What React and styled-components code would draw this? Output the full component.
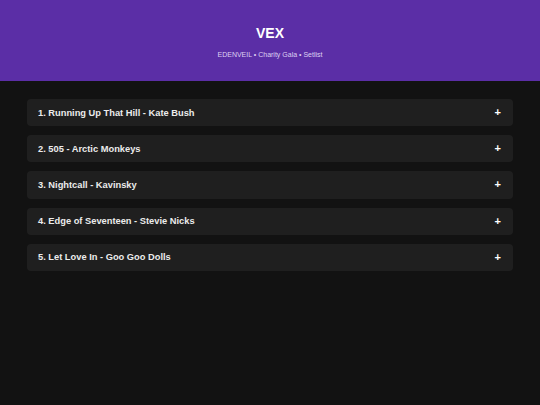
import React from 'react';
import styled, { createGlobalStyle } from 'styled-components';

const GlobalStyle = createGlobalStyle`
  html, body {
    margin: 0;
    padding: 0;
    background: #121212;
    font-family: "Liberation Sans", Arial, sans-serif;
  }
`;

const songs = [
  'Running Up That Hill - Kate Bush',
  '505 - Arctic Monkeys',
  'Nightcall - Kavinsky',
  'Edge of Seventeen - Stevie Nicks',
  'Let Love In - Goo Goo Dolls',
];

export default function App() {
  return (
    <Page>
      <GlobalStyle />
      <Header>
        <Title>VEX</Title>
        <Subtitle>EDENVEIL • Charity Gala • Setlist</Subtitle>
      </Header>
      <List>
        {songs.map((song, i) => (
          <Item key={song}>
            <ItemTitle>
              {i + 1}. {song}
            </ItemTitle>
            <Plus>+</Plus>
          </Item>
        ))}
      </List>
    </Page>
  );
}

const Page = styled.div`
  min-height: 405px;
  background: #121212;
`;

const Header = styled.header`
  height: 81px;
  box-sizing: border-box;
  background: #5b2ea6;
  display: flex;
  flex-direction: column;
  align-items: center;
  padding-top: 25px;
`;

const Title = styled.h1`
  margin: 0;
  font-size: 14px;
  font-weight: bold;
  color: #fff;
  line-height: 17px;
`;

const Subtitle = styled.p`
  margin: 9px 0 0;
  font-size: 7px;
  color: #ddd0f2;
  line-height: 8px;
`;

const List = styled.div`
  display: flex;
  flex-direction: column;
  gap: 9px;
  padding: 18px 27px;
`;

const Item = styled.div`
  height: 27.2px;
  box-sizing: border-box;
  background: #1f1f1f;
  border-radius: 4px;
  display: flex;
  align-items: center;
  justify-content: space-between;
  padding: 0 11px;
`;

const ItemTitle = styled.span`
  color: #ececec;
  font-size: 9.3px;
  font-weight: bold;
`;

const Plus = styled.span`
  color: #fff;
  font-size: 11px;
  font-weight: bold;
  line-height: 1;
  margin-right: 1px;
`;
